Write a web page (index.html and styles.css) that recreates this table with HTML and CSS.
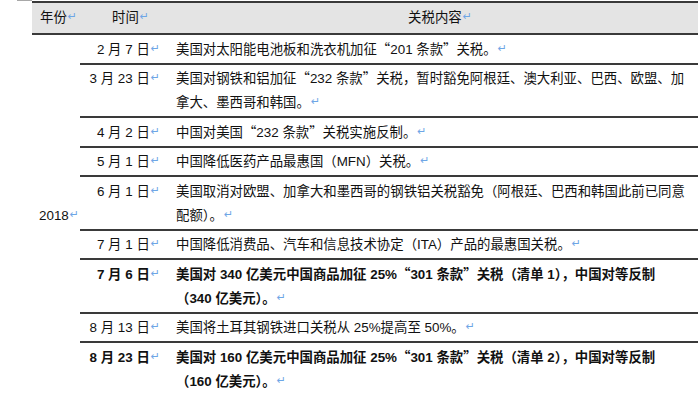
FILE: index.html
```html
<!DOCTYPE html>
<html lang="zh-CN">
<head>
<meta charset="utf-8">
<title>关税</title>
<link rel="stylesheet" href="styles.css">
</head>
<body>
<div class="wrap">
<table class="tariffs">
  <colgroup>
    <col class="c-year">
    <col class="c-date">
    <col class="c-text">
  </colgroup>
  <thead>
    <tr>
      <th class="h-year">年份<span class="pm">↵</span></th>
      <th class="h-date">时间<span class="pm">↵</span></th>
      <th class="h-text">关税内容<span class="pm">↵</span></th>
    </tr>
  </thead>
  <tbody>
    <tr>
      <td class="year" rowspan="9">2018<span class="pm">↵</span></td>
      <td class="date">2 月 7 日<span class="pm">↵</span></td>
      <td class="text">美国对太阳能电池板和洗衣机加征<span class="q">“</span>201 条款<span class="q">”</span>关税。<span class="pm">↵</span></td>
    </tr>
    <tr>
      <td class="date">3 月 23 日<span class="pm">↵</span></td>
      <td class="text">美国对钢铁和铝加征<span class="q">“</span>232 条款<span class="q">”</span>关税，暂时豁免阿根廷、澳大利亚、巴西、欧盟、加拿大、墨西哥和韩国。<span class="pm">↵</span></td>
    </tr>
    <tr>
      <td class="date">4 月 2 日<span class="pm">↵</span></td>
      <td class="text">中国对美国<span class="q">“</span>232 条款<span class="q">”</span>关税实施反制。<span class="pm">↵</span></td>
    </tr>
    <tr>
      <td class="date">5 月 1 日<span class="pm">↵</span></td>
      <td class="text">中国降低医药产品最惠国（MFN）关税。<span class="pm">↵</span></td>
    </tr>
    <tr>
      <td class="date">6 月 1 日<span class="pm">↵</span></td>
      <td class="text">美国取消对欧盟、加拿大和墨西哥的钢铁铝关税豁免（阿根廷、巴西和韩国此前已同意配额）。<span class="pm">↵</span></td>
    </tr>
    <tr>
      <td class="date">7 月 1 日<span class="pm">↵</span></td>
      <td class="text">中国降低消费品、汽车和信息技术协定（ITA）产品的最惠国关税。<span class="pm">↵</span></td>
    </tr>
    <tr class="bold">
      <td class="date">7 月 6 日<span class="pm">↵</span></td>
      <td class="text">美国对 340 亿美元中国商品加征 25%<span class="q">“</span>301 条款<span class="q">”</span>关税（清单 1），中国对等反制<br>（340 亿美元）。<span class="pm">↵</span></td>
    </tr>
    <tr>
      <td class="date">8 月 13 日<span class="pm">↵</span></td>
      <td class="text">美国将土耳其钢铁进口关税从 25%提高至 50%。<span class="pm">↵</span></td>
    </tr>
    <tr class="bold last">
      <td class="date">8 月 23 日<span class="pm">↵</span></td>
      <td class="text">美国对 160 亿美元中国商品加征 25%<span class="q">“</span>301 条款<span class="q">”</span>关税（清单 2），中国对等反制<br>（160 亿美元）。<span class="pm">↵</span></td>
    </tr>
  </tbody>
</table>
</div>
</body>
</html>
```

FILE: styles.css
```css
html, body {
  margin: 0;
  padding: 0;
  background: #ffffff;
}

body {
  font-family: "Liberation Sans", "Noto Sans CJK SC", sans-serif;
  font-size: 13.4px;
  color: #111111;
}

.wrap {
  position: relative;
  padding-left: 32px;
  padding-top: 1px;
}

.wrap::before {
  content: "";
  position: absolute;
  left: 17px;
  top: 0;
  width: 15px;
  height: 1px;
  background: #a8a8a8;
}

.tariffs {
  width: 666px;
  border-collapse: collapse;
  table-layout: fixed;
}

.c-year { width: 48px; }
.c-date { width: 88px; }
.c-text { width: 530px; }

.tariffs th {
  background: #e4e4e4;
  font-weight: normal;
  line-height: 24px;
  padding: 3px 0;
  border-top: 2px solid #3a3a3a;
  border-bottom: 2px solid #3a3a3a;
  text-align: left;
  white-space: nowrap;
}

.h-year { padding-left: 8px !important; }
.h-date { padding-left: 32px !important; }
.h-text { text-align: center !important; padding-left: 14px !important; }

.tariffs td {
  line-height: 24px;
  padding: 2.75px 0 0.75px;
  vertical-align: top;
  border-bottom: 2px solid #3a3a3a;
}

.tariffs td.year {
  vertical-align: middle;
  padding-left: 7px;
  border-bottom: 3px solid #3a3a3a;
}

.tariffs td.date {
  text-align: right;
  padding-right: 8px;
  white-space: nowrap;
}

.tariffs td.text {
  padding-left: 8px;
  padding-right: 7px;
}

.bold td {
  font-weight: bold;
}

.last td {
  border-bottom: 3px solid #3a3a3a;
}

.q {
  font-family: "Noto Sans CJK SC", sans-serif;
  line-height: 1;
}

.pm {
  font-family: "DejaVu Sans", sans-serif;
  font-weight: normal;
  font-size: 11px;
  line-height: 0;
  color: #6ea6e6;
  vertical-align: 2px;
  margin-left: 1px;
}
```
